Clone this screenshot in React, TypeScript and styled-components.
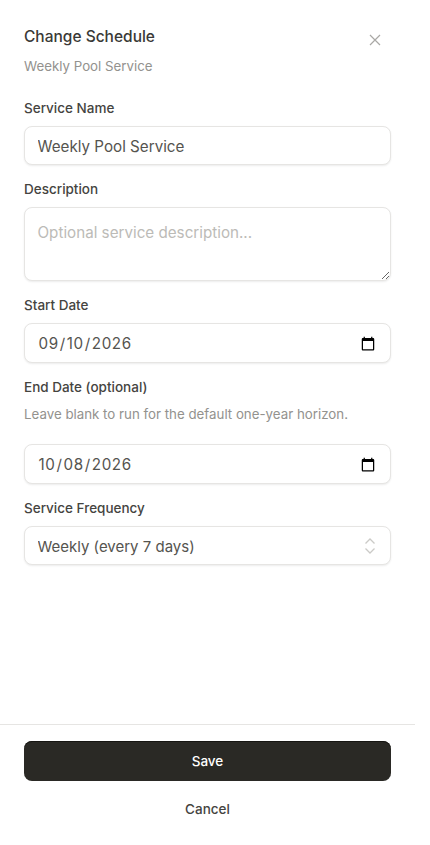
import styled, { createGlobalStyle } from 'styled-components';

const GlobalStyle = createGlobalStyle`
  html, body {
    margin: 0;
    padding: 0;
    background: #fff;
    font-family: Inter, "Noto Sans", sans-serif;
  }
`;

const Sheet = styled.div`
  width: 415px;
  height: 845px;
  display: flex;
  flex-direction: column;
  box-sizing: border-box;
`;

const Header = styled.header`
  display: flex;
  justify-content: space-between;
  align-items: flex-start;
  padding: 27px 24px 0;
`;

const Title = styled.h2`
  margin: 0;
  font-size: 15.5px;
  line-height: 20px;
  font-weight: 500;
  color: #3a3936;
`;

const Subtitle = styled.p`
  margin: 10px 0 0;
  font-size: 13.3px;
  line-height: 18px;
  color: #93928e;
`;

const CloseButton = styled.button`
  border: 0;
  background: none;
  padding: 0;
  margin: 6px 9px 0 0;
  width: 14px;
  height: 14px;
  color: #a9a8a5;
  display: flex;
`;

const Form = styled.form`
  flex: 1;
  display: flex;
  flex-direction: column;
  gap: 15px;
  padding: 23.8px 24px 0;
`;

const Field = styled.div`
  display: flex;
  flex-direction: column;
  gap: 8.5px;
`;

const Label = styled.label`
  font-size: 13.5px;
  line-height: 18.5px;
  font-weight: 500;
  color: #45443f;
`;

const Hint = styled.p`
  margin: 0 0 21.5px;
  font-size: 13.3px;
  line-height: 18px;
  color: #93928e;
`;

const Control = styled.input`
  box-sizing: border-box;
  display: block;
  width: 100%;
  height: 39.5px;
  padding: 1px 12.5px 0;
  border: 1px solid #e6e5e3;
  border-radius: 8px;
  box-shadow: 0 1px 2px rgba(0, 0, 0, 0.08);
  background: #fff;
  font: inherit;
  font-size: 15.2px;
  color: #55544f;
  outline: none;

  &[type='date'] {
    letter-spacing: 0.6px;
  }
`;

const TextArea = styled.textarea`
  box-sizing: border-box;
  display: block;
  width: 100%;
  height: 74px;
  padding: 15px 12.5px 13px;
  border: 1px solid #e6e5e3;
  border-radius: 8px;
  box-shadow: 0 1px 2px rgba(0, 0, 0, 0.08);
  background: #fff;
  font: inherit;
  font-size: 15.2px;
  line-height: 20px;
  color: #55544f;
  outline: none;

  &::placeholder {
    color: #bcbbb7;
  }
`;

const SelectWrap = styled.div`
  position: relative;
`;

const Select = styled(Control).attrs({ as: 'select' })`
  appearance: none;
  font-size: 15px;
`;

const SelectIcon = styled.svg`
  position: absolute;
  right: 14px;
  top: 11px;
  width: 14px;
  height: 18px;
  pointer-events: none;
  color: #cbcac7;
`;

const Footer = styled.footer`
  border-top: 1px solid #e6e5e3;
  padding: 16px 24px 0;
  height: 121px;
  box-sizing: border-box;
  display: flex;
  flex-direction: column;
`;

const SaveButton = styled.button`
  height: 40px;
  border: 0;
  border-radius: 8px;
  background: #2a2925;
  box-shadow: inset 0 1px 0 #161512;
  color: #fff;
  font: inherit;
  font-size: 13.5px;
  font-weight: 500;
`;

const CancelButton = styled.button`
  height: 40px;
  margin-top: 8px;
  border: 0;
  background: none;
  color: #45443f;
  font: inherit;
  font-size: 13.5px;
  font-weight: 500;
`;

export default function App() {
  return (
    <>
      <GlobalStyle />
      <Sheet>
        <Header>
          <div>
            <Title>Change Schedule</Title>
            <Subtitle>Weekly Pool Service</Subtitle>
          </div>
          <CloseButton type="button" aria-label="Close">
            <svg width="14" height="14" viewBox="0 0 14 14" fill="none" stroke="currentColor" strokeWidth="1.2">
              <path d="M2 2l10 10M12 2L2 12" />
            </svg>
          </CloseButton>
        </Header>
        <Form>
          <Field>
            <Label>Service Name</Label>
            <Control defaultValue="Weekly Pool Service" />
          </Field>
          <Field>
            <Label>Description</Label>
            <TextArea placeholder="Optional service description..." />
          </Field>
          <Field>
            <Label>Start Date</Label>
            <Control type="date" defaultValue="2026-09-10" />
          </Field>
          <Field>
            <Label>End Date (optional)</Label>
            <div>
              <Hint>Leave blank to run for the default one-year horizon.</Hint>
              <Control type="date" defaultValue="2026-10-08" />
            </div>
          </Field>
          <Field>
            <Label>Service Frequency</Label>
            <SelectWrap>
              <Select defaultValue="7">
                <option value="7">Weekly (every 7 days)</option>
                <option value="14">Every 2 weeks (14 days)</option>
              </Select>
              <SelectIcon viewBox="0 0 14 18" fill="none" stroke="currentColor" strokeWidth="1.3">
                <path d="M2.5 6.5L7 2l4.5 4.5M2.5 11.5L7 16l4.5-4.5" />
              </SelectIcon>
            </SelectWrap>
          </Field>
        </Form>
        <Footer>
          <SaveButton type="button">Save</SaveButton>
          <CancelButton type="button">Cancel</CancelButton>
        </Footer>
      </Sheet>
    </>
  );
}
